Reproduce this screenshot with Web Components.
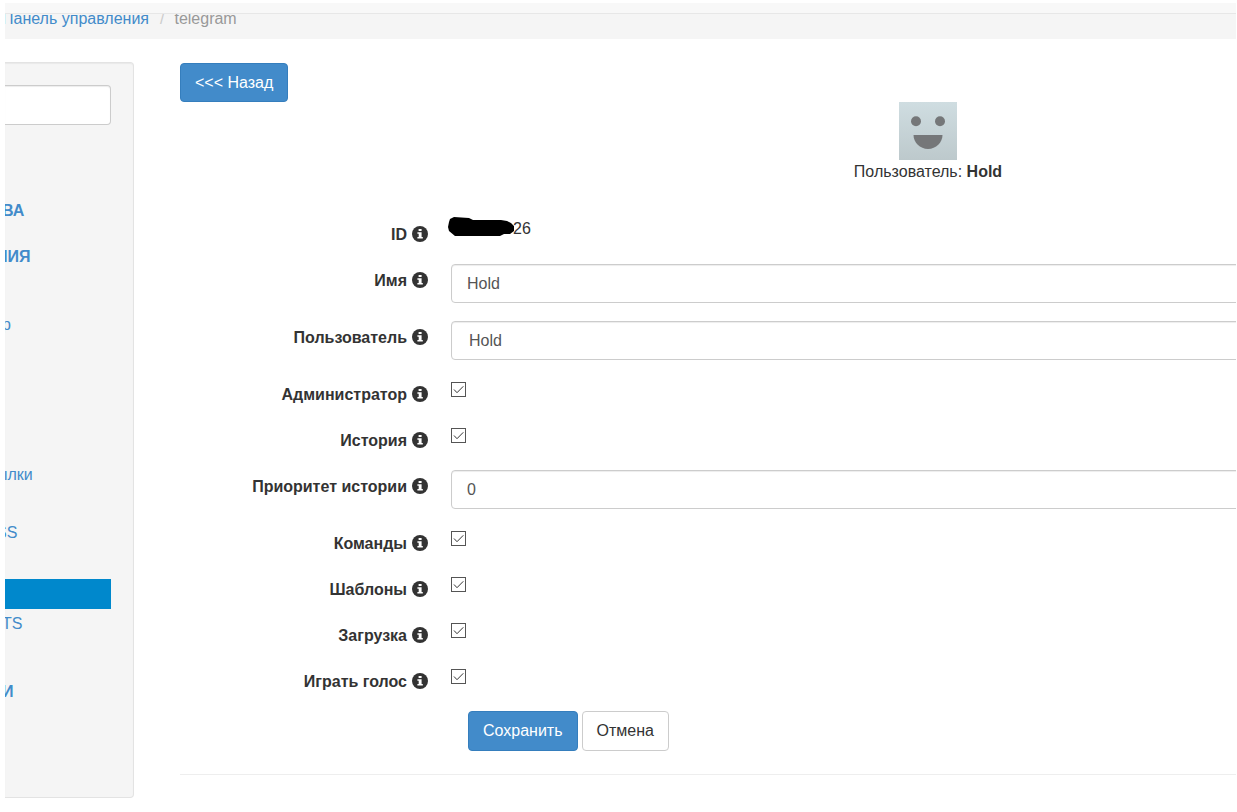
<!DOCTYPE html>
<html lang="ru">
<head>
<meta charset="utf-8">
<title>telegram</title>
<style>
html { background: #fff; }
body { margin: 3px 1px 0 5px; font: 16px/22px "Liberation Sans", Arial, sans-serif; color: #333; }
</style>
</head>
<body>
<control-panel></control-panel>
<script>
const define = (name, html) => customElements.define(name, class extends HTMLElement {
  connectedCallback() {
    if (this.shadowRoot) return;
    const t = document.createElement('template');
    t.innerHTML = '<style>*{box-sizing:border-box}</style>' + (typeof html === 'function' ? html(this) : html);
    this.attachShadow({ mode: 'open' }).append(t.content.cloneNode(true));
  }
});

define('bread-crumbs', `
<style>
:host { display: block; background: #f5f5f5; }
.bar { height: 11px; background: #f8f8f8; border-bottom: 1px solid #e7e7e7; }
nav { height: 25px; overflow: hidden; }
ol { display: flex; list-style: none; margin: 0 0 0 -3px; padding: 0; line-height: 10px; color: #999; white-space: nowrap; }
li + li::before { content: "/"; color: #ccc; padding: 0 10px 0 11px; }
a { color: #428bca; text-decoration: none; }
</style>
<div class="bar"></div>
<nav><ol><li><a href="#">Панель управления</a></li><li>telegram</li></ol></nav>`);

define('side-menu', `
<style>
:host { display: block; background: #f5f5f5; border: 1px solid #e3e3e3; border-left: 0; border-radius: 0 4px 4px 0;
  padding: 22px 22px 90px 0; box-shadow: inset 0 1px 1px rgba(0,0,0,.05); overflow: hidden; }
input { display: block; width: 100%; height: 40px; margin: 0 0 71px; border: 1px solid #ccc; border-left: 0; border-radius: 0 4px 4px 0;
  box-shadow: inset 0 1px 1px rgba(0,0,0,.075); background: #fff; font: inherit; }
nav { display: grid; line-height: 30px; white-space: nowrap;
  grid-template-rows: 30px 16px 30px 38px 30px 120px 30px 28px 30px 31px 30px 30px 38px 30px; }
a { color: #428bca; text-decoration: none; margin-left: -3px; }
a.long { margin-left: -9px; }
a.active { background: #08c; margin-left: 0; }
b { font-weight: bold; }
</style>
<input type="search" aria-label="Поиск">
<nav>
<a href="#" style="grid-row:1"><b>ВА</b></a>
<a href="#" style="grid-row:3" class="long"><b>НИЯ</b></a>
<a href="#" style="grid-row:5">р</a>
<a href="#" style="grid-row:7" class="long">ылки</a>
<a href="#" style="grid-row:9" class="long">SS</a>
<a href="#" style="grid-row:11" class="active" aria-label="telegram"></a>
<a href="#" style="grid-row:12">TS</a>
<a href="#" style="grid-row:14"><b>И</b></a>
</nav>`);

define('action-button', el => `
<style>
:host { display: inline-block; }
button { display: block; height: var(--button-height, 40px); padding: 0 14px; border: 1px solid #ccc; border-radius: 4px; background: #fff; color: #333; font: inherit; white-space: nowrap; }
.primary { background: #428bca; border-color: #357ebd; color: #fff; }
</style>
<button type="button" class="${el.hasAttribute('primary') ? 'primary' : ''}"><slot></slot></button>`);

define('user-card', `
<style>
:host { display: block; text-align: center; line-height: 24px; }
svg { display: block; margin: 0 auto; }
</style>
<svg width="58" height="58" viewBox="0 0 58 58" role="img" aria-label="Аватар">
<defs><linearGradient id="g" x2="0" y2="1"><stop stop-color="#cfdde1"/><stop offset="1" stop-color="#bdc9cc"/></linearGradient></defs>
<path fill="url(#g)" d="M0 0h58v58H0z"/>
<g fill="#757779"><circle cx="17" cy="19.300" r="5"/><circle cx="41" cy="19.300" r="5"/>
<path d="M14.500 33h29c0 7.500-6.500 14-14.500 14s-14.500-6.500-14.500-14z"/></g></svg>
<div><slot></slot></div>`);

const info = `<svg width="16" height="16" viewBox="0 0 16 16" aria-hidden="true"><circle cx="8" cy="8" r="8" fill="#333"/><path fill="#fff" d="M6.600 2.900h3v2.200h-3zM5.400 6.300h4.200v4.800h1.200v1.500H5.400v-1.500h1.300V7.800H5.400z"/></svg>`;

define('form-row', el => {
  const kind = el.getAttribute('kind'), value = el.getAttribute('value') || '';
  const control = {
    text: `<input id="c" class="field" type="text" value="${value}">`,
    select: `<select id="c" class="field"><option>${value}</option></select>`,
    check: `<input id="c" class="check" type="checkbox" checked>`,
    output: `<output id="c"><svg width="62" height="20" viewBox="0 0 62 20" aria-hidden="true"><path d="M-1 1 3-1 18 0 22 2 50 2 56 3 60 5 63 8 63 13 59 16 53 16 49 18 4 18-2 13-3 9-2 4z"/></svg>${value}</output>`
  }[kind];
  return `
<style>
:host { display: grid; grid-template-columns: 248px 1fr; column-gap: 23px; align-items: start; }
label { display: flex; justify-content: flex-end; gap: 5px; margin-top: 7px; font-weight: bold; line-height: 20px; white-space: nowrap; }
label svg { flex: none; margin-top: 1px; }
.row { min-height: 28px; }
.field { display: block; width: 100%; height: 39px; margin: 0; padding: 0 15px; border: 1px solid #ccc; border-radius: 4px; background: #fff;
  box-shadow: inset 0 1px 1px rgba(0,0,0,.075); color: #555; font: inherit; appearance: none; }
select.field { padding: 0 17px; }
.check { display: block; appearance: none; width: 15px; height: 15px; margin: 4px 0 0; border: 1px solid #555;
  background: #fff url("data:image/svg+xml,%3Csvg xmlns='http://www.w3.org/2000/svg' viewBox='0 0 13 13'%3E%3Cpath d='M2 6.500l3 3.200 6.300-6.400' fill='none' stroke='%23333'/%3E%3C/svg%3E"); }
output { display: flex; line-height: 22px; }
output svg { overflow: visible; }
</style>
<label for="c">${el.getAttribute('label')} ${info}</label><div class="row">${control}</div>`;
});

define('user-form', `
<style>
:host { display: block; }
form { display: flex; flex-direction: column; gap: 18px; margin: 34px 0 0; }
.actions { display: flex; gap: 4px; padding-left: 288px; }
hr { margin: 23px 0 0; border: 0; border-top: 1px solid #eee; }
</style>
<form>
<form-row label="ID" kind="output" value="26"></form-row>
<form-row label="Имя" kind="text" value="Hold"></form-row>
<form-row label="Пользователь" kind="select" value="Hold"></form-row>
<form-row label="Администратор" kind="check"></form-row>
<form-row label="История" kind="check"></form-row>
<form-row label="Приоритет истории" kind="text" value="0"></form-row>
<form-row label="Команды" kind="check"></form-row>
<form-row label="Шаблоны" kind="check"></form-row>
<form-row label="Загрузка" kind="check"></form-row>
<form-row label="Играть голос" kind="check"></form-row>
<div class="actions"><action-button primary>Сохранить</action-button><action-button>Отмена</action-button></div>
</form>
<hr>`);

define('control-panel', `
<style>
:host { display: block; overflow: hidden; }
.body { display: grid; grid-template-columns: 129px minmax(0, 1fr); column-gap: 46px; align-items: start; }
side-menu { margin-top: 23px; }
main { width: calc(100% + 440px); padding-top: 24px; }
.back { display: block; --button-height: 39px; }
</style>
<bread-crumbs></bread-crumbs>
<div class="body">
<side-menu></side-menu>
<main>
<action-button class="back" primary>&lt;&lt;&lt; Назад</action-button>
<user-card>Пользователь: <b>Hold</b></user-card>
<user-form></user-form>
</main>
</div>`);
</script>
</body>
</html>
